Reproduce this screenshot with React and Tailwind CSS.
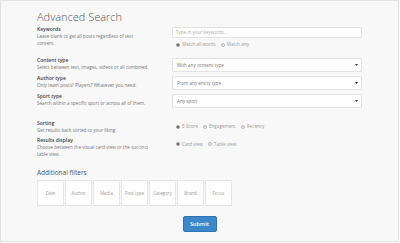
import React from "react";

const font = { fontFamily: '"Open Sans", "Liberation Sans", sans-serif' };

function Radio({ on }) {
  return on ? (
    <span className="inline-flex items-center justify-center w-[4px] h-[4px] rounded-full border-[0.5px] border-[#999] bg-[#eee] mr-[2px]">
      <span className="w-[2px] h-[2px] rounded-full bg-[#555]" />
    </span>
  ) : (
    <span className="inline-block w-[4px] h-[4px] rounded-full border-[0.5px] border-[#bbb] bg-[#e8e8e8] mr-[2px]" />
  );
}

function RadioRow({ items, className = "" }) {
  return (
    <div className={"flex items-center h-[7px] pl-[4px] text-[4.6px] leading-[7px] text-[#999] " + className}>
      {items.map((it, i) => (
        <span key={i} className="flex items-center mr-[5px] whitespace-nowrap">
          <Radio on={i === 0} />
          {it}
        </span>
      ))}
    </div>
  );
}

function Select({ text }) {
  return (
    <div className="mt-[1px] h-[14px] w-[190px] bg-white border border-[#e2e2e2] rounded-[1px] flex items-center justify-between pl-[4px] pr-[3px]">
      <span className="text-[4.6px] text-[#777] whitespace-nowrap">{text}</span>
      <svg width="3" height="2" viewBox="0 0 3 2">
        <path d="M0 0 L3 0 L1.5 2 Z" fill="#333" />
      </svg>
    </div>
  );
}

function Left({ label, lines }) {
  return (
    <div className="w-[135px] shrink-0">
      <div className="text-[5px] leading-[7px] font-semibold text-[#444] whitespace-nowrap">{label}</div>
      {lines.map((l, i) => (
        <div key={i} className="text-[4.6px] leading-[7px] text-[#777] whitespace-nowrap">{l}</div>
      ))}
    </div>
  );
}

export default function App() {
  const filters = ["Date", "Author", "Media", "Post type", "Category", "Brand", "Focus"];
  return (
    <div style={font} className="w-[400px] h-[243px] bg-white">
      <div className="w-[399px] h-[242px] border border-[#e2e2e2] bg-[#f8f8f8] pl-[36px] pt-[9px]">
        <div className="text-[11px] leading-[14px] font-light text-[#555] whitespace-nowrap">Advanced Search</div>

        <div className="flex mt-[2px]">
          <Left label="Keywords" lines={["Leave blank to get all posts regardless of text", "content."]} />
          <div>
            <div className="mt-[1px] h-[11px] w-[190px] bg-white border border-[#e2e2e2] rounded-[1px] flex items-center pl-[3px]">
              <span className="text-[4.6px] text-[#aaa] whitespace-nowrap">Type in your keywords...</span>
            </div>
            <RadioRow items={["Match all words", "Match any"]} className="mt-[3px]" />
          </div>
        </div>

        <div className="flex mt-[9px]">
          <Left label="Content type" lines={["Select between text, images, videos or all combined."]} />
          <Select text="With any content type" />
        </div>

        <div className="flex mt-[3px]">
          <Left label="Author type" lines={["Only team posts? Players? Whatever you need."]} />
          <Select text="From any entity type" />
        </div>

        <div className="flex mt-[3px]">
          <Left label="Sport type" lines={["Search within a specific sport or across all of them."]} />
          <Select text="Any sport" />
        </div>

        <div className="flex mt-[12px]">
          <Left label="Sorting" lines={["Get results back sorted to your liking."]} />
          <RadioRow items={["E-Score", "Engagement", "Recency"]} className="mt-[3px]" />
        </div>

        <div className="flex mt-[3px]">
          <Left label="Results display" lines={["Choose between the visual card view or the succinct", "table view."]} />
          <RadioRow items={["Card view", "Table view"]} className="mt-[3.5px]" />
        </div>

        <div className="mt-[10px] text-[6.5px] leading-[9px] text-[#555] whitespace-nowrap">Additional filters</div>

        <div className="flex gap-[1px] mt-[3px]">
          {filters.map((f) => (
            <div key={f} className="w-[27px] h-[26px] bg-white border border-[#e6e6e6] flex items-center justify-center">
              <span className="text-[4.4px] text-[#999] whitespace-nowrap">{f}</span>
            </div>
          ))}
        </div>

        <div className="flex justify-center mt-[10px] -ml-[36px]">
          <div className="w-[34px] h-[16px] rounded-[2px] bg-[#3a87c9] border border-[#2f74b0] flex items-center justify-center">
            <span className="text-[5.5px] font-semibold text-white">Submit</span>
          </div>
        </div>
      </div>
    </div>
  );
}
